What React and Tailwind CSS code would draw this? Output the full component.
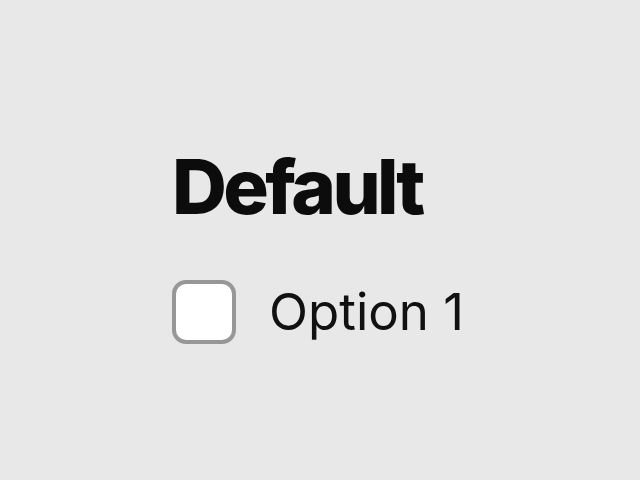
export default function App() {
  return (
    <div
      className="w-[640px] h-[480px] bg-[#e8e8e8] pl-[172px] pt-[136px]"
      style={{ fontFamily: "Inter, 'Noto Sans', sans-serif" }}
    >
      <h1 className="text-[76px] leading-[100px] font-extrabold tracking-[-3.6px] text-[#0c0c0c]">Default</h1>
      <label className="mt-[44px] flex items-center gap-[33px]">
        <span className="w-[64px] h-[64px] rounded-[14px] border-4 border-[#979797] bg-white" />
        <span className="text-[51px] leading-[64px] text-[#111111]">Option 1</span>
      </label>
    </div>
  );
}
